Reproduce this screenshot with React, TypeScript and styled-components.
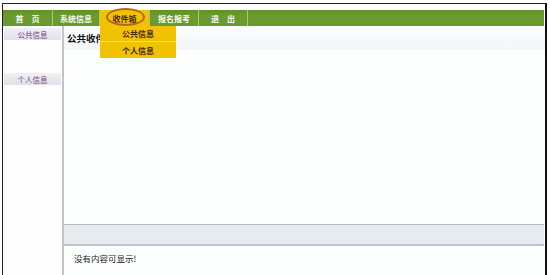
import React from "react";
import styled, { createGlobalStyle } from "styled-components";

const Global = createGlobalStyle`
  html, body { margin: 0; padding: 0; background: #ffffff; overflow: hidden; }
  body { font-family: "Noto Sans CJK SC", "Noto Sans", sans-serif; }
`;

const Page = styled.div`
  width: 550px;
  height: 275px;
  padding: 3px 3px 0 2px;
  box-sizing: border-box;
`;

const Frame = styled.div`
  height: 272px;
  box-sizing: border-box;
  border-top: 1px solid #222;
  border-left: 1px solid #222;
  border-right: 2px solid #111;
  background: #fdfefe;
  display: flex;
  flex-direction: column;
  padding-top: 6px;
  position: relative;
`;

const NavBar = styled.div`
  height: 16px;
  margin-right: 1px;
  background: linear-gradient(#5f9228, #6c9c30 40%, #6a9a2e);
  display: flex;
  position: relative;
  flex-shrink: 0;
`;

const NavItem = styled.div<{ $active?: boolean; $w: number }>`
  width: ${(p) => p.$w}px;
  display: flex;
  align-items: center;
  justify-content: center;
  font-size: 8px;
  font-weight: bold;
  color: ${(p) => (p.$active ? "#4a2a00" : "#f4f8ec")};
  background: ${(p) => (p.$active ? "#f0c200" : "transparent")};
  border-right: 1px solid #a8c880;
  box-sizing: border-box;
  position: relative;
  white-space: pre;
`;

const Ellipse = styled.div`
  position: absolute;
  left: 6px;
  top: -2px;
  width: 39px;
  height: 18px;
  border: 2px solid #b8661a;
  border-radius: 50%;
  box-sizing: border-box;
`;

const Dropdown = styled.div`
  position: absolute;
  left: 97px;
  top: 16px;
  width: 76px;
  background: #f0c200;
  display: flex;
  flex-direction: column;
  z-index: 5;
`;

const DropItem = styled.div<{ $last?: boolean }>`
  height: 16px;
  display: flex;
  align-items: center;
  justify-content: center;
  font-size: 8px;
  font-weight: bold;
  color: #4a2a00;
  border-bottom: ${(p) => (p.$last ? "none" : "1px solid #f8dc70")};
  box-sizing: border-box;
`;

const Body = styled.div`
  flex: 1;
  display: flex;
`;

const Sidebar = styled.div`
  width: 59px;
  border-right: 2px solid #c4c4c4;
  display: flex;
  flex-direction: column;
  padding-top: 1px;
  background: #fdfdfe;
`;

const SideTab = styled.div<{ $gap: number }>`
  height: 12px;
  margin: ${(p) => p.$gap}px 1px 0 1px;
  background: linear-gradient(#f2f0f4, #e2e0e8);
  color: #6a4a80;
  font-size: 7.5px;
  display: flex;
  align-items: center;
  justify-content: center;
`;

const Main = styled.div`
  flex: 1;
  display: flex;
  flex-direction: column;
  min-width: 0;
`;

const TitleBand = styled.div`
  height: 24px;
  background: linear-gradient(#fcfdfe, #f3f5f8);
  display: flex;
  align-items: center;
  padding-left: 3px;
  font-size: 9.5px;
  font-weight: bold;
  color: #111;
`;

const Content = styled.div`
  flex: 1;
  background: #fdfefe;
`;

const StatusBar = styled.div`
  height: 22px;
  box-sizing: border-box;
  border-top: 1px solid #b6bcc2;
  border-bottom: 2px solid #bfc3c6;
  background: #e6ebef;
  margin-right: 1px;
`;

const Footer = styled.div`
  height: 29px;
  display: flex;
  align-items: flex-start;
  padding: 6px 0 0 10px;
  font-size: 8.5px;
  color: #222;
  box-sizing: border-box;
`;

const navItems = [
  { label: "首　页", w: 50 },
  { label: "系统信息", w: 47 },
  { label: "收件箱", w: 50, active: true },
  { label: "报名报考", w: 49 },
  { label: "退　出", w: 49 },
];

export default function App() {
  return (
    <>
      <Global />
      <Page>
        <Frame>
          <NavBar>
            {navItems.map((n) => (
              <NavItem key={n.label} $w={n.w} $active={n.active}>
                {n.label}
                {n.active && <Ellipse />}
              </NavItem>
            ))}
            <Dropdown>
              <DropItem>公共信息</DropItem>
              <DropItem $last>个人信息</DropItem>
            </Dropdown>
          </NavBar>
          <Body>
            <Sidebar>
              <SideTab $gap={1}>公共信息</SideTab>
              <SideTab $gap={33}>个人信息</SideTab>
            </Sidebar>
            <Main>
              <TitleBand>公共收件箱</TitleBand>
              <Content />
              <StatusBar />
              <Footer>没有内容可显示!</Footer>
            </Main>
          </Body>
        </Frame>
      </Page>
    </>
  );
}
